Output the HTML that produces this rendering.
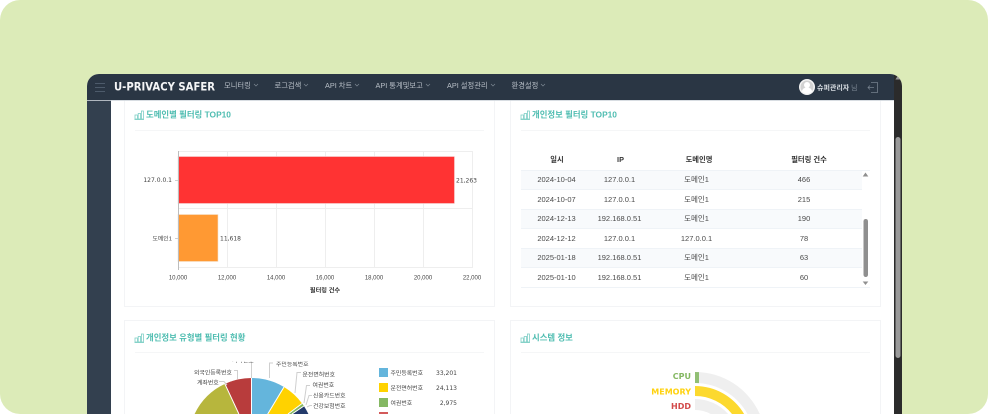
<!DOCTYPE html>
<html lang="ko">
<head>
<meta charset="utf-8">
<title>U-PRIVACY SAFER</title>
<style>
html,body{margin:0;padding:0;background:#fff;width:988px;height:414px;overflow:hidden}
svg{display:block;filter:blur(.35px)}
text{font-family:"Liberation Sans","Noto Sans CJK KR",sans-serif}
.m{font-size:7.3px;fill:#b8bfc7}
.t{font-size:8.400px;font-weight:700;fill:#4fbdb1}
.tx{font-size:7.500px;fill:#4a4a4a;text-anchor:middle}
.th{font-size:7.300px;font-weight:700;fill:#333;text-anchor:middle}
.n{font-family:"DejaVu Sans",sans-serif;font-size:6px;fill:#444}
.l{font-size:5.900px;fill:#444}
.g{font-family:"DejaVu Sans",sans-serif;font-size:8px;font-weight:700;text-anchor:end}
.gl{stroke:#eeeeee;stroke-width:1;fill:none}
.ld{stroke:#cfcfcf;stroke-width:1;fill:none}
.cv{stroke:#7d8894;stroke-width:.7;fill:none}
.ic{stroke:#7fcfc6;stroke-width:.8;fill:none}
</style>
</head>
<body>
<svg width="988" height="414" viewBox="0 0 988 414" xmlns="http://www.w3.org/2000/svg">
<defs>
<clipPath id="win"><path d="M99 74H890a12 12 0 0 1 12 12V414H87V86a12 12 0 0 1 12-12z"/></clipPath>
<clipPath id="pie"><rect x="120" y="361.700" width="380" height="52.300"/></clipPath>
<g id="ico" class="ic"><rect x="0" y="4" width="2.400" height="4"/><rect x="3.200" y="2.500" width="2.400" height="5.500"/><rect x="6.400" y="0" width="2" height="8"/><path d="M-.5 8.600H9"/></g>
<path id="cv" class="cv" d="M0 0l2 2 2-2"/>
</defs>
<rect width="988" height="414" rx="20" fill="#dcebb8"/>
<g clip-path="url(#win)">
<rect x="87" y="74" width="815" height="340" fill="#fff"/>
<rect x="87" y="100" width="24" height="314" fill="#33404f"/>
<rect x="894" y="74" width="8" height="340" fill="#2b2b2b"/>
<rect x="895.500" y="137" width="5" height="221" rx="2.500" fill="#9a9a9a"/>
<!-- cards -->
<rect x="124.500" y="100" width="370" height="206.500" fill="#fff" stroke="#f3f4f6"/>
<rect x="510.500" y="100" width="370" height="206.500" fill="#fff" stroke="#f3f4f6"/>
<path d="M124.500 414V320.500H494.500V414M510.500 414V320.500H880.500V414" fill="#fff" stroke="#f3f4f6"/>
<path d="M135 130.500H484M521 130.500H870M135 352.500H484M521 352.500H870" stroke="#f5f6f7"/>
<!-- header -->
<rect x="87" y="74" width="807" height="26" fill="#2a3644"/>
<path d="M898 75.500l2.600 4h-5.200z" fill="#9a9a9a"/>
<rect x="87" y="100" width="807" height=".8" fill="#cfd5db"/>
<path d="M95 83.500H105M95 87.500H105M95 91.500H105" stroke="#4d5b6b"/>
<text x="114" y="90.500" font-size="11.500" font-weight="700" fill="#f4f5f6" textLength="101" lengthAdjust="spacingAndGlyphs" style="font-family:'DejaVu Sans',sans-serif">U-PRIVACY SAFER</text>
<text class="m" x="224" y="88">모니터링</text><use href="#cv" x="254" y="84"/>
<text class="m" x="274.500" y="88">로그검색</text><use href="#cv" x="304" y="84"/>
<text class="m" x="325" y="88">API 차트</text><use href="#cv" x="355" y="84"/>
<text class="m" x="375.500" y="88">API 통계및보고</text><use href="#cv" x="426" y="84"/>
<text class="m" x="447" y="88">API 설정관리</text><use href="#cv" x="491" y="84"/>
<text class="m" x="511.500" y="88">환경설정</text><use href="#cv" x="541" y="84"/>
<circle cx="807" cy="87" r="8" fill="#f4f4f4"/>
<circle cx="807" cy="87" r="6.500" fill="#d2d2d2"/>
<circle cx="807" cy="85" r="3" fill="#fff"/>
<path d="M802 91.500a5 4 0 0 1 10 0a7 7 0 0 1-10 0z" fill="#fff"/>
<text x="817" y="90" font-size="7" font-weight="700" fill="#d7dce1">슈퍼관리자</text>
<text x="851" y="90" font-size="7" fill="#7f8a96">님</text>
<path d="M871 82.500H877.500V92.500H871M868 87.500H874M870 85.500l-2 2 2 2" stroke="#76818d" stroke-width=".8" fill="none"/>
<!-- titles -->
<use href="#ico" x="135" y="111"/>
<text class="t" x="146" y="117.500">도메인별 필터링 TOP10</text>
<use href="#ico" x="521" y="111"/>
<text class="t" x="532" y="117.500">개인정보 필터링 TOP10</text>
<use href="#ico" x="135" y="334"/>
<text class="t" x="146" y="340.500">개인정보 유형별 필터링 현황</text>
<use href="#ico" x="521" y="334"/>
<text class="t" x="532" y="340.500">시스템 정보</text>
<!-- bar chart -->
<path class="gl" d="M178.500 151.500H472.500V267.500H178.500M227.500 151.500V267.500M276.500 151.500V267.500M325.500 151.500V267.500M374.500 151.500V267.500M423.500 151.500V267.500M178.500 208.500H472.500"/>
<rect x="178" y="156.500" width="276.500" height="47" fill="#ff3333" stroke="#f5d9d9" stroke-width=".6"/>
<rect x="178" y="214.500" width="40" height="47" fill="#ff9933" stroke="#f6e3cf" stroke-width=".6"/>
<path d="M178.500 151V270" stroke="#bdbdbd" fill="none"/>
<path d="M175 180.500H178M175 238.500H178" stroke="#cfcfcf"/>
<text class="n" x="172" y="182" text-anchor="end">127.0.0.1</text>
<text class="l" x="172" y="240.500" text-anchor="end">도메인1</text>
<text class="n" x="456" y="182.500">21,263</text>
<text class="n" x="220" y="240.500">11,618</text>
<g class="n" text-anchor="middle">
<text x="178" y="279.500">10,000</text><text x="227" y="279.500">12,000</text><text x="276" y="279.500">14,000</text><text x="325" y="279.500">16,000</text><text x="374" y="279.500">18,000</text><text x="423" y="279.500">20,000</text><text x="472" y="279.500">22,000</text>
</g>
<text x="325" y="292.500" font-size="6.200" font-weight="700" fill="#333" text-anchor="middle">필터링 건수</text>
<!-- table -->
<rect x="521" y="170" width="341" height="19.500" fill="#f8fafc"/>
<rect x="521" y="209" width="341" height="19.500" fill="#f8fafc"/>
<rect x="521" y="248" width="341" height="19.500" fill="#f8fafc"/>
<path d="M521 170.500H870M521 189.500H862M521 209.500H862M521 228.500H862M521 248.500H862M521 267.500H862M521 287.500H870" stroke="#eff3f7"/>
<text class="th" x="557" y="162">일시</text><text class="th" x="620.500" y="162">IP</text><text class="th" x="699" y="162">도메인명</text><text class="th" x="809" y="162">필터링 건수</text>
<g class="tx">
<text x="556.500" y="182">2024-10-04</text><text x="619.500" y="182">127.0.0.1</text><text x="696.500" y="182">도메인1</text><text x="804" y="182">466</text>
<text x="556.500" y="202">2024-10-07</text><text x="619.500" y="202">127.0.0.1</text><text x="696.500" y="202">도메인1</text><text x="804" y="202">215</text>
<text x="556.500" y="221">2024-12-13</text><text x="619.500" y="221">192.168.0.51</text><text x="696.500" y="221">도메인1</text><text x="804" y="221">190</text>
<text x="556.500" y="241">2024-12-12</text><text x="619.500" y="241">127.0.0.1</text><text x="696.500" y="241">127.0.0.1</text><text x="804" y="241">78</text>
<text x="556.500" y="260">2025-01-18</text><text x="619.500" y="260">192.168.0.51</text><text x="696.500" y="260">도메인1</text><text x="804" y="260">63</text>
<text x="556.500" y="280">2025-01-10</text><text x="619.500" y="280">192.168.0.51</text><text x="696.500" y="280">도메인1</text><text x="804" y="280">60</text>
</g>
<path d="M865.500 172.500l2.800 4h-5.600z" fill="#8f8f8f"/>
<rect x="863.500" y="219" width="4.500" height="58" rx="2.200" fill="#8f8f8f"/>
<path d="M865.500 285l2.800-3.500h-5.600z" fill="#8f8f8f"/>
<!-- pie -->
<path d="M251.500 414V378A63 63 0 0 1 284 387L267.700 414Z" fill="#64b5dc"/>
<path d="M267.700 414L284 387A63 63 0 0 1 302.100 403.500L288 414Z" fill="#ffd200"/>
<path d="M288 414L302.100 403.500A63 63 0 0 1 303.900 406L292 414Z" fill="#85b863"/>
<path d="M292 414L303.900 406A63 63 0 0 1 308.400 414Z" fill="#243b6b"/>
<path d="M238.900 414L224.900 383.900A63 63 0 0 0 194.600 414Z" fill="#b7b63d"/>
<path d="M238.900 414L224.900 383.900A63 63 0 0 1 251.500 378V414Z" fill="#b83c3c"/>
<path d="M238.900 414L224.900 383.900M251.500 414V378M267.700 414L284 387M288 414L302.100 403.500M292 414L303.900 406" stroke="#fff" fill="none"/>
<g clip-path="url(#pie)">
<path class="ld" d="M251.500 378V355M269.500 378V363H273M295 393L297 372.500H301M304 403L306.500 385.500H310M306 405L309 395.500H312M307 407L310 405.500H312M234 370.500H237.500V379M219 381.500H224L227 385"/>
<text class="l" x="232" y="362.500">기타번호</text>
<text class="l" x="276" y="366">주민등록번호</text>
<text class="l" x="302.500" y="376.500">운전면허번호</text>
<text class="l" x="312.500" y="387">여권번호</text>
<text class="l" x="313" y="397.500">신용카드번호</text>
<text class="l" x="313" y="408">건강보험번호</text>
<text class="l" x="194" y="374.500">외국인등록번호</text>
<text class="l" x="197" y="384.500">계좌번호</text>
</g>
<!-- legend -->
<rect x="379" y="368" width="9" height="9" fill="#64b5dc"/>
<rect x="379" y="383" width="9" height="9" fill="#ffd200"/>
<rect x="379" y="398" width="9" height="9" fill="#85b863"/>
<rect x="379" y="412" width="9" height="2" fill="#d35a5a"/>
<text class="l" x="390.500" y="375">주민등록번호</text>
<text class="l" x="390.500" y="390">운전면허번호</text>
<text class="l" x="390.500" y="405">여권번호</text>
<text class="n" x="457" y="375" text-anchor="end">33,201</text>
<text class="n" x="457" y="390" text-anchor="end">24,113</text>
<text class="n" x="457" y="405" text-anchor="end">2,975</text>
<!-- gauge -->
<path d="M695 372A71 71 0 0 1 759.800 414H747.500A60 60 0 0 0 695 383Z" fill="#efefef"/>
<path d="M695 372L699 372.100V383.100L695 383Z" fill="#91bf74"/>
<path d="M695 386A57 57 0 0 1 744.100 414H732A47 47 0 0 0 695 396Z" fill="#fcd92e"/>
<path d="M695 399A44 44 0 0 1 728.100 414H710.700A33 33 0 0 0 695 410Z" fill="#efefef"/>
<text class="g" x="691" y="379" fill="#85b863">CPU</text>
<text class="g" x="691" y="394.500" fill="#ffd20f">MEMORY</text>
<text class="g" x="691" y="409" fill="#d24a4a">HDD</text>
</g>
</svg>
</body>
</html>
